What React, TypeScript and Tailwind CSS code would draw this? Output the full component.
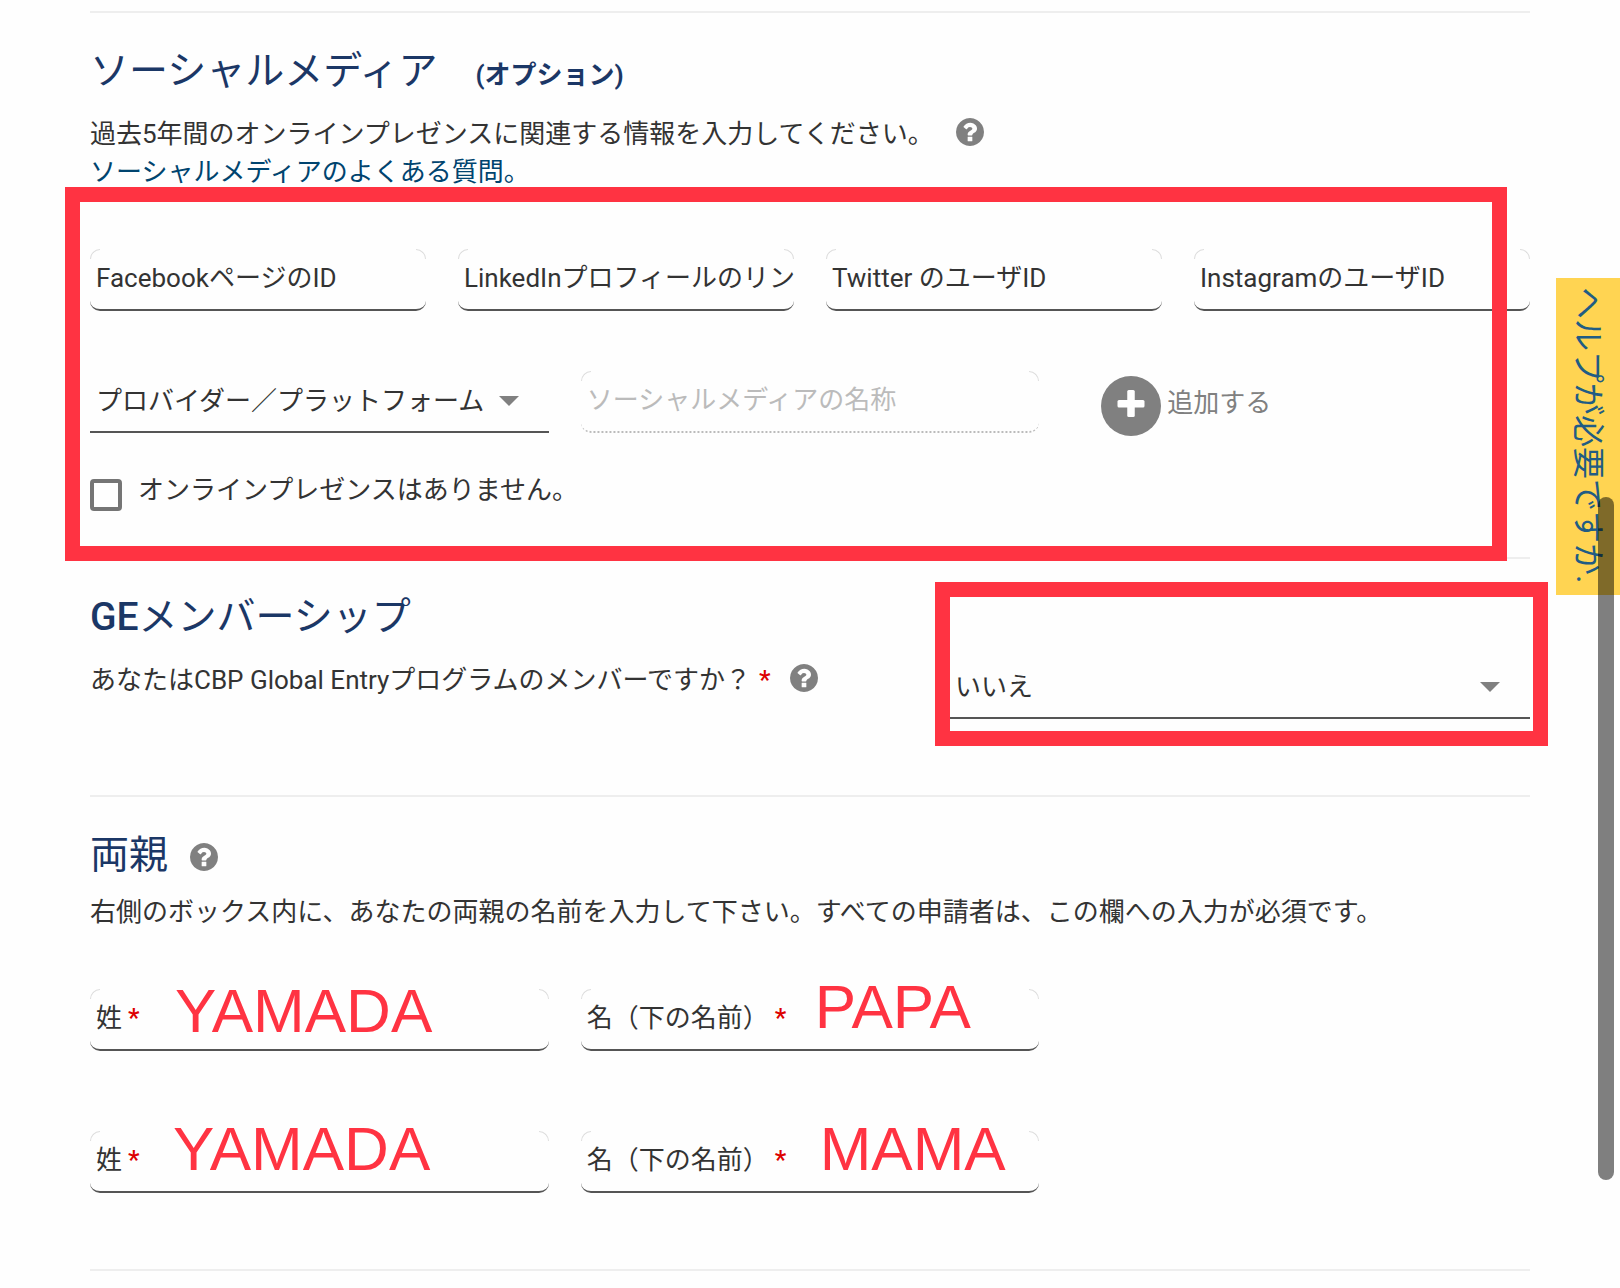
import type { ReactNode } from "react";

const HELP_PATH =
  "M1024 1376v-192q0-14-9-23t-23-9h-192q-14 0-23 9t-9 23v192q0 14 9 23t23 9h192q14 0 23-9t9-23zm256-672q0-88-55.5-163t-138.5-116-170-41q-243 0-371 213-15 24 8 42l132 100q7 6 19 6 16 0 25-12 53-68 86-92 34-24 86-24 48 0 85.5 26t37.5 59q0 38-20 61t-68 45q-63 28-115.5 86.5t-52.5 125.5v36q0 14 9 23t23 9h192q14 0 23-9t9-23q0-19 21.500-49.500t54.500-49.500q32-18 49-28.500t46-35 44.500-48 28-60.500 12.500-81zm384 192q0 209-103 385.500t-279.500 279.500-385.500 103-385.500-103-279.500-279.500-103-385.500 103-385.500 279.500-279.500 385.500-103 385.500 103 279.500 279.500 103 385.500z";

function HelpButton({ label }: { label: string }) {
  return (
    <button type="button" aria-label={label} className="size-7 shrink-0 text-[#808080]">
      <svg viewBox="128 128 1536 1536" className="size-7" fill="currentColor" aria-hidden="true">
        <path d={HELP_PATH} />
      </svg>
    </button>
  );
}

function Section({ children }: { children: ReactNode }) {
  return <section className="border-t-2 border-[#eeeeee] pt-[30px]">{children}</section>;
}

function Title({ children }: { children: ReactNode }) {
  return <h2 className="text-[39px] leading-[56px] text-[#1b3766]">{children}</h2>;
}

/* Faint arcs at the two upper corners of a text field */
function Corners() {
  return (
    <>
      <span className="pointer-events-none absolute top-0 left-0 size-2.5 rounded-tl-[10px] border-t border-l border-[#dddddd]" />
      <span className="pointer-events-none absolute top-0 right-0 size-2.5 rounded-tr-[10px] border-t border-r border-[#dddddd]" />
    </>
  );
}

function TextField({ label, disabled = false }: { label: string; disabled?: boolean }) {
  return (
    <div className="relative min-w-0">
      <input
        type="text"
        aria-label={label}
        placeholder={label}
        disabled={disabled}
        className="block h-[62px] w-full rounded-[10px] border-b-2 border-[#555555] bg-transparent pl-1.5 pb-0.5 text-[26px] text-[#333333] placeholder:text-[#333333] placeholder:opacity-100 disabled:border-dotted disabled:border-[#bbbbbb] disabled:placeholder:text-[#bbbbbb]"
      />
      <Corners />
    </div>
  );
}

function RequiredField({ id, label, children }: { id: string; label: string; children: ReactNode }) {
  return (
    <div className="relative flex h-[62px] min-w-0 items-center rounded-[10px] border-b-2 border-[#555555] pb-0.5 pl-1.5">
      <label htmlFor={id} className="shrink-0 whitespace-nowrap">
        {label}
        <span className="ml-1.5 font-medium text-[#dd0000]">*</span>
      </label>
      <input id={id} type="text" required className="h-full min-w-0 flex-1 bg-transparent px-2 outline-none" />
      <Corners />
      {children}
    </div>
  );
}

function SelectField({ label, value }: { label: string; value: string }) {
  return (
    <div className="relative min-w-0">
      <select
        aria-label={label}
        defaultValue={value}
        className="block h-[62px] w-full appearance-none border-b-2 border-[#555555] bg-transparent pl-1.5 text-[26px] text-[#333333]"
      >
        <option>{value}</option>
      </select>
      <svg
        viewBox="0 0 20 10"
        className="pointer-events-none absolute top-[25px] right-[30px] h-2.5 w-5"
        fill="#808080"
        aria-hidden="true"
      >
        <path d="M0 0h20L10 10z" />
      </svg>
    </div>
  );
}

const NOTE =
  "pointer-events-none absolute font-['Liberation_Sans',sans-serif] text-[62px] leading-[62px] text-[#ff3342]";

export default function App() {
  return (
    <div
      className="relative min-h-screen overflow-hidden bg-[#fefefe] font-['Roboto','Noto_Sans_CJK_JP',sans-serif] text-[26px] leading-[38px] text-[#333333]"
      lang="ja"
    >
      <main className="px-[90px] pt-[11px]">
        <Section>
          <div className="flex items-baseline gap-[38px]">
            <Title>ソーシャルメディア</Title>
            <strong className="font-bold text-[#1b3766]">(オプション)</strong>
          </div>
          <div className="mt-4 flex items-start gap-[22px]">
            <p>過去5年間のオンラインプレゼンスに関連する情報を入力してください。</p>
            <span className="flex pt-[3px]">
              <HelpButton label="ソーシャルメディアのヘルプ" />
            </span>
          </div>
          <a href="#faq" className="block w-fit text-[#00446f]">
            ソーシャルメディアのよくある質問。
          </a>

          <div className="relative mt-[58px] pb-[46px]">
            <div className="grid grid-cols-4 gap-8">
              <TextField label="FacebookページのID" />
              <TextField label="LinkedInプロフィールのリン" />
              <TextField label="Twitter のユーザID" />
              <TextField label="InstagramのユーザID" />
            </div>
            <div className="mt-[60px] grid grid-cols-3 gap-8">
              <SelectField label="プロバイダー／プラットフォーム" value="プロバイダー／プラットフォーム" />
              <TextField label="ソーシャルメディアの名称" disabled />
              <div className="flex items-start pt-[5px] pl-[30px]">
                <button type="button" className="flex items-start gap-1.5 text-[#808080]">
                  <svg viewBox="0 0 60 60" className="size-[60px]" aria-hidden="true">
                    <circle cx="30" cy="30" r="30" fill="#808080" />
                    <rect x="16.500" y="24" width="27" height="7.500" rx="1.500" fill="#fff" />
                    <rect x="26.250" y="14" width="7.500" height="27" rx="1.500" fill="#fff" />
                  </svg>
                  <span className="pt-2">追加する</span>
                </button>
              </div>
            </div>
            <div className="mt-[35px] flex items-start gap-4">
              <input
                id="no-presence"
                type="checkbox"
                className="mt-2 size-8 appearance-none rounded border-4 border-[#757575] checked:bg-[#757575]"
              />
              <label htmlFor="no-presence">オンラインプレゼンスはありません。</label>
            </div>
            <div className="pointer-events-none absolute -top-[62px] right-[23px] -bottom-1 -left-[25px] z-10 border-[15px] border-[#ff3342]" />
          </div>
        </Section>

        <Section>
          <div className="flex justify-between pb-[76px]">
            <div>
              <Title>
                <span className="font-medium">GE</span>メンバーシップ
              </Title>
              <div className="mt-4 flex items-start">
                <p>あなたはCBP Global Entryプログラムのメンバーですか？</p>
                <span className="ml-2 font-medium text-[#dd0000]">*</span>
                <span className="ml-[19px] flex pt-[3px]">
                  <HelpButton label="GEメンバーシップのヘルプ" />
                </span>
              </div>
            </div>
            <div className="relative mt-[68px] w-[581px] self-start">
              <SelectField label="GEメンバーシップ" value="いいえ" />
              <div className="pointer-events-none absolute -top-[75px] -right-[18px] -bottom-[27px] -left-[14px] border-[15px] border-[#ff3342]" />
            </div>
          </div>
        </Section>

        <Section>
          <div className="flex items-end gap-[22px]">
            <Title>両親</Title>
            <span className="flex pb-3">
              <HelpButton label="両親のヘルプ" />
            </span>
          </div>
          <p className="mt-2.5">
            右側のボックス内に、あなたの両親の名前を入力して下さい。すべての申請者は、この欄への入力が必須です。
          </p>
          <div className="mt-[58px] grid grid-cols-3 gap-x-8 gap-y-20 pb-[76px]">
            <RequiredField id="father-last" label="姓">
              <span className={`${NOTE} top-[-9px] left-[85px]`}>YAMADA</span>
            </RequiredField>
            <RequiredField id="father-first" label="名（下の名前）">
              <span className={`${NOTE} top-[-13px] left-[234px]`}>PAPA</span>
            </RequiredField>
            <div className="col-span-2 col-start-1 grid grid-cols-subgrid">
              <RequiredField id="mother-last" label="姓">
                <span className={`${NOTE} top-[-13px] left-[83px]`}>YAMADA</span>
              </RequiredField>
              <RequiredField id="mother-first" label="名（下の名前）">
                <span className={`${NOTE} top-[-13px] left-[239px]`}>MAMA</span>
              </RequiredField>
            </div>
          </div>
        </Section>
        <hr className="border-t-2 border-[#eeeeee]" />
      </main>

      <button
        type="button"
        className="absolute top-[278px] right-0 w-16 bg-[#ffd452] pt-[9px] pb-3 text-[32px] leading-[56px] text-[#215c84] [text-orientation:sideways] [writing-mode:vertical-rl]"
      >
        ヘルプが必要ですか.
      </button>
      <div className="absolute top-[497px] right-1.5 h-[683px] w-4 rounded-full bg-black/50" />
    </div>
  );
}
